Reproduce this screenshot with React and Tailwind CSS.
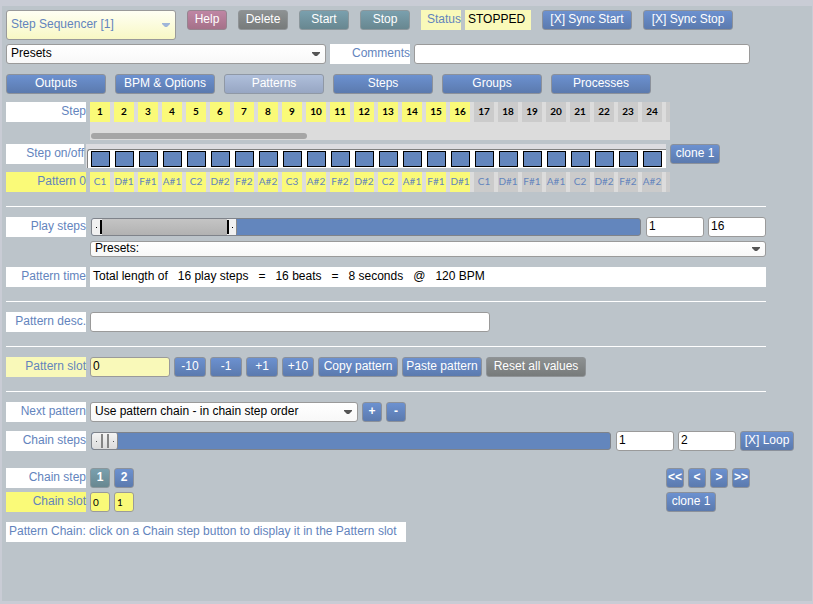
import { useState } from "react";
import clsx from "clsx";

const NOTES = [
  "C1", "D#1", "F#1", "A#1", "C2", "D#2", "F#2", "A#2", "C3", "A#2", "F#2", "D#2",
  "C2", "A#1", "F#1", "D#1", "C1", "D#1", "F#1", "A#1", "C2", "D#2", "F#2", "A#2",
];
const PLAYED = 16;
const TABS = ["Outputs", "BPM & Options", "Patterns", "Steps", "Groups", "Processes"];

const TONES = {
  blue: "bg-linear-to-b from-[#6c91d0] to-[#5b7aae] border-[#8b919b]",
  active: "bg-linear-to-b from-[#afbfdb] to-[#97a6c3] border-[#8f98a5]",
  pink: "bg-linear-to-b from-[#bf86a4] to-[#a57189] border-[#96848f]",
  gray: "bg-linear-to-b from-[#8d9192] to-[#777b7b] border-[#8f9396]",
  teal: "bg-linear-to-b from-[#7aa0ae] to-[#688790] border-[#8b979c]",
};

function Btn({ tone = "blue", className, children, ...rest }) {
  return (
    <button
      type="button"
      className={clsx(
        "h-5 shrink-0 whitespace-nowrap rounded-[3px] border pb-0.5 text-center leading-4 text-white",
        TONES[tone],
        className
      )}
      {...rest}
    >
      {children}
    </button>
  );
}

function Label({ as: Tag = "span", className, children, ...rest }) {
  return (
    <Tag
      className={clsx("block h-5 shrink-0 whitespace-nowrap text-right leading-[18px] text-[#6384bd]", className)}
      {...rest}
    >
      {children}
    </Tag>
  );
}

function TextBox({ className, ...rest }) {
  return (
    <input
      type="text"
      className={clsx(
        "h-5 min-w-0 rounded-[3px] border border-[#9a9a9a] px-0.5 pb-0.5 leading-4 text-black outline-none",
        className
      )}
      {...rest}
    />
  );
}

function Select({ className, selectClass, arrow = "#555555", options, ...rest }) {
  return (
    <div className={clsx("relative", className)}>
      <select
        className={clsx(
          "block h-full w-full appearance-none rounded-[3px] border border-[#9a9a9a] bg-linear-to-b pr-5 pb-0.5 pl-1 outline-none",
          selectClass
        )}
        {...rest}
      >
        {options.map((o) => (
          <option key={o}>{o}</option>
        ))}
      </select>
      <svg
        className="pointer-events-none absolute top-1/2 right-1.5 h-1 w-2 -translate-y-1/2"
        viewBox="0 0 8 4"
        aria-hidden="true"
      >
        <path d="M0 0h8v1L5 4H3L0 1z" fill={arrow} />
      </svg>
    </div>
  );
}

function RangeSlider({ name, min, max, low, high, children }) {
  return (
    <div className="relative mx-px flex h-[18px] min-w-0 flex-1 overflow-hidden rounded-[3px] border border-[#7f838a] bg-[#6386bd]">
      {children}
      <input
        type="range"
        aria-label={`${name} first`}
        min={min}
        max={max}
        defaultValue={low}
        className="absolute inset-y-0 left-0 w-1/2 opacity-0"
      />
      <input
        type="range"
        aria-label={`${name} last`}
        min={min}
        max={max}
        defaultValue={high}
        className="absolute inset-y-0 right-0 w-1/2 opacity-0"
      />
    </div>
  );
}

function Rule() {
  return <hr className="mt-[14px] mb-[10px] h-px max-w-[760px] border-0 bg-white" />;
}

function Cells({ items, className }) {
  return (
    <div className="flex gap-1">
      {items.map((text, i) => (
        <span
          key={i}
          className={clsx(
            "h-5 w-5 shrink-0 whitespace-nowrap text-center font-['Lato',sans-serif] leading-[19px]",
            i < PLAYED ? "bg-[#fafa78]" : "bg-[#cbcbcb]",
            className
          )}
        >
          {text}
        </span>
      ))}
    </div>
  );
}

export default function App() {
  const [tab, setTab] = useState("Patterns");
  const numbers = NOTES.map((_, i) => i + 1);

  return (
    <div className="flex min-h-screen flex-col bg-[#c9ccd5] pt-1.5 pr-px pb-[3px] pl-0.5 font-['Liberation_Sans',Arial,sans-serif] text-[12px]">
      <main className="flex-1 bg-[#bcc4ca] pt-1 pl-1">
        <header className="flex items-start gap-[11px]">
          <Select
            aria-label="Module"
            className="h-[30px] w-[170px]"
            selectClass="from-[#fffff4] to-[#f8f8c4] text-[#6384bd]"
            arrow="#9fb6d9"
            options={["Step Sequencer [1]"]}
          />
          <Btn tone="pink" className="w-10">Help</Btn>
          <Btn tone="gray" className="w-[50px]">Delete</Btn>
          <Btn tone="teal" className="w-[50px]">Start</Btn>
          <Btn tone="teal" className="w-[50px]">Stop</Btn>
          <div className="flex gap-1">
            <Label className="w-10 bg-[#f9f9b9]">Status</Label>
            <output className="h-5 w-[66px] bg-[#f9f9b9] pl-[3px] leading-[18px]">STOPPED</output>
          </div>
          <Btn className="w-[90px]">[X] Sync Start</Btn>
          <Btn className="w-[90px]">[X] Sync Stop</Btn>
        </header>

        <div className="mt-1 flex max-w-[744px] gap-1">
          <Select
            aria-label="Presets"
            className="h-5 w-80"
            selectClass="from-white to-[#f8f8f8] leading-4"
            options={["Presets"]}
          />
          <Label as="label" htmlFor="comments" className="w-20 bg-white">Comments</Label>
          <TextBox id="comments" className="flex-1 bg-white" />
        </div>

        <nav className="mt-[10px] flex gap-[9px]">
          {TABS.map((t) => (
            <Btn key={t} tone={t === tab ? "active" : "blue"} className="w-[100px]" onClick={() => setTab(t)}>
              {t}
            </Btn>
          ))}
        </nav>

        <section className="mt-2 flex flex-col gap-1">
          <div className="flex gap-1">
            <Label className="w-20 bg-white">Step</Label>
            <div className="h-[38px] w-[580px] overflow-hidden bg-[#dcdcdc]">
              <Cells items={[...numbers, ""]} className="text-[10px] font-bold text-black" />
              <div className="mt-[11px] ml-px h-1.5 w-[216px] rounded-full bg-[#a6a6a6]" />
            </div>
          </div>

          <div className="flex">
            <Label className="w-[78px] bg-white">Step on/off</Label>
            <div className="ml-0.5 h-6 w-[580px] bg-[#dcdce0] pt-[5px] pl-px">
              <div className="flex h-[19px] gap-[5px] rounded-tl-[3px] border-t border-l border-[#808080] bg-white pt-px pl-[3px]">
                {numbers.map((n) => (
                  <input
                    key={n}
                    type="checkbox"
                    defaultChecked
                    aria-label={`Step ${n} on/off`}
                    className="h-4 w-[19px] shrink-0 appearance-none border border-black bg-[#6386bd]"
                  />
                ))}
              </div>
            </div>
            <Btn className="ml-1 w-[50px]">clone 1</Btn>
          </div>

          <div className="flex gap-1">
            <Label className="w-20 bg-[#fafa78]">Pattern 0</Label>
            <div className="w-[580px] overflow-hidden bg-[#dcdcdc]">
              <Cells items={[...NOTES, ""]} className="text-[10px] text-[#6384bd]" />
            </div>
          </div>
        </section>

        <Rule />

        <section className="max-w-[760px]">
          <div className="flex items-center gap-1">
            <Label className="w-20 bg-white">Play steps</Label>
            <RangeSlider name="Play steps" min={1} max={64} low={1} high={16}>
              <div className="flex w-[145px] items-center justify-between rounded-[2px] border-r border-[#8a8a8a] bg-linear-to-b from-[#c4c4c4] to-[#b2b2b2]">
                <span className="flex h-full items-center bg-[#f1f1f1] pl-1">
                  <i className="mr-[3px] size-px bg-black" />
                  <i className="h-[14px] w-0.5 bg-black" />
                </span>
                <span className="flex h-full items-center bg-[#f1f1f1] pr-[3px]">
                  <i className="mr-[3px] h-[14px] w-0.5 bg-black" />
                  <i className="size-px bg-black" />
                </span>
              </div>
            </RangeSlider>
            <TextBox aria-label="First play step" className="w-[58px] bg-white" defaultValue="1" />
            <TextBox aria-label="Last play step" className="w-[58px] bg-white" defaultValue="16" />
          </div>
          <Select
            aria-label="Play step presets"
            className="mt-1 ml-[84px] h-4"
            selectClass="from-white to-[#f8f8f8] leading-3"
            options={["Presets:"]}
          />
          <div className="mt-[10px] flex gap-1">
            <Label className="w-20 bg-white">Pattern time</Label>
            <p className="h-5 flex-1 whitespace-pre bg-white pl-[3px] leading-[18px]">
              {"Total length of   16 play steps   =   16 beats   =   8 seconds   @   120 BPM"}
            </p>
          </div>
        </section>

        <Rule />

        <div className="flex gap-1">
          <Label as="label" htmlFor="desc" className="w-20 bg-white">Pattern desc.</Label>
          <TextBox id="desc" className="w-[400px] bg-white" />
        </div>

        <Rule />

        <div className="flex gap-1">
          <Label as="label" htmlFor="slot" className="w-20 bg-[#f9f9b9]">Pattern slot</Label>
          <TextBox id="slot" className="w-20 bg-[#f9f9b9]" defaultValue="0" />
          {["-10", "-1", "+1", "+10"].map((n) => (
            <Btn key={n} className="w-8">{n}</Btn>
          ))}
          <Btn className="w-20">
            <span className="flex justify-center">Copy pattern</span>
          </Btn>
          <Btn className="w-20">
            <span className="flex justify-center">Paste pattern</span>
          </Btn>
          <Btn tone="gray" className="w-[100px]">Reset all values</Btn>
        </div>

        <Rule />

        <div className="flex gap-1">
          <Label as="label" htmlFor="next" className="w-20 bg-white">Next pattern</Label>
          <Select
            id="next"
            className="h-5 w-[268px]"
            selectClass="from-white to-[#f8f8f8] leading-4"
            options={["Use pattern chain - in chain step order"]}
          />
          <Btn className="w-5 font-bold">+</Btn>
          <Btn className="w-5 font-bold">-</Btn>
        </div>

        <div className="mt-[9px] flex max-w-[788px] items-center gap-1">
          <Label className="w-20 bg-white">Chain steps</Label>
          <RangeSlider name="Chain steps" min={1} max={64} low={1} high={2}>
            <div className="flex w-[26px] items-center justify-center gap-1 rounded-[2px] border-r border-[#8a8a8a] bg-linear-to-b from-[#f4f4f4] to-[#dcdcdc]">
              <i className="size-px bg-[#555555]" />
              <i className="h-[14px] w-0.5 bg-[#858585]" />
              <i className="h-[14px] w-0.5 bg-[#858585]" />
              <i className="size-px bg-[#555555]" />
            </div>
          </RangeSlider>
          <TextBox aria-label="First chain step" className="w-[58px] bg-white" defaultValue="1" />
          <TextBox aria-label="Last chain step" className="w-[58px] bg-white" defaultValue="2" />
          <Btn className="w-[54px]">[X] Loop</Btn>
        </div>

        <section className="mt-[17px] flex max-w-[744px] justify-between">
          <div className="flex flex-col gap-1">
            <div className="flex gap-1">
              <Label className="w-20 bg-white">Chain step</Label>
              <Btn tone="teal" className="w-5 font-bold">1</Btn>
              <Btn className="w-5 font-bold">2</Btn>
            </div>
            <div className="flex gap-1">
              <Label className="w-20 bg-[#fafa78]">Chain slot</Label>
              {["0", "1"].map((v, i) => (
                <input
                  key={v}
                  type="text"
                  aria-label={`Chain slot ${i + 1}`}
                  defaultValue={v}
                  className="h-5 w-5 rounded-[3px] border border-[#9a9a9a] bg-[#fafa78] px-0.5 font-['Lato',sans-serif] text-[10px] text-black"
                />
              ))}
            </div>
          </div>
          <div className="flex flex-col items-start gap-1">
            <div className="flex gap-1">
              {["<<", "<", ">", ">>"].map((n) => (
                <Btn key={n} className="w-[18px] font-bold">
                  <span className="flex justify-center">{n}</span>
                </Btn>
              ))}
            </div>
            <Btn className="w-[50px]">clone 1</Btn>
          </div>
        </section>

        <p className="mt-[10px] h-5 w-[400px] bg-white pl-[3px] leading-[18px] text-[#6384bd]">
          Pattern Chain: click on a Chain step button to display it in the Pattern slot
        </p>
      </main>
    </div>
  );
}
